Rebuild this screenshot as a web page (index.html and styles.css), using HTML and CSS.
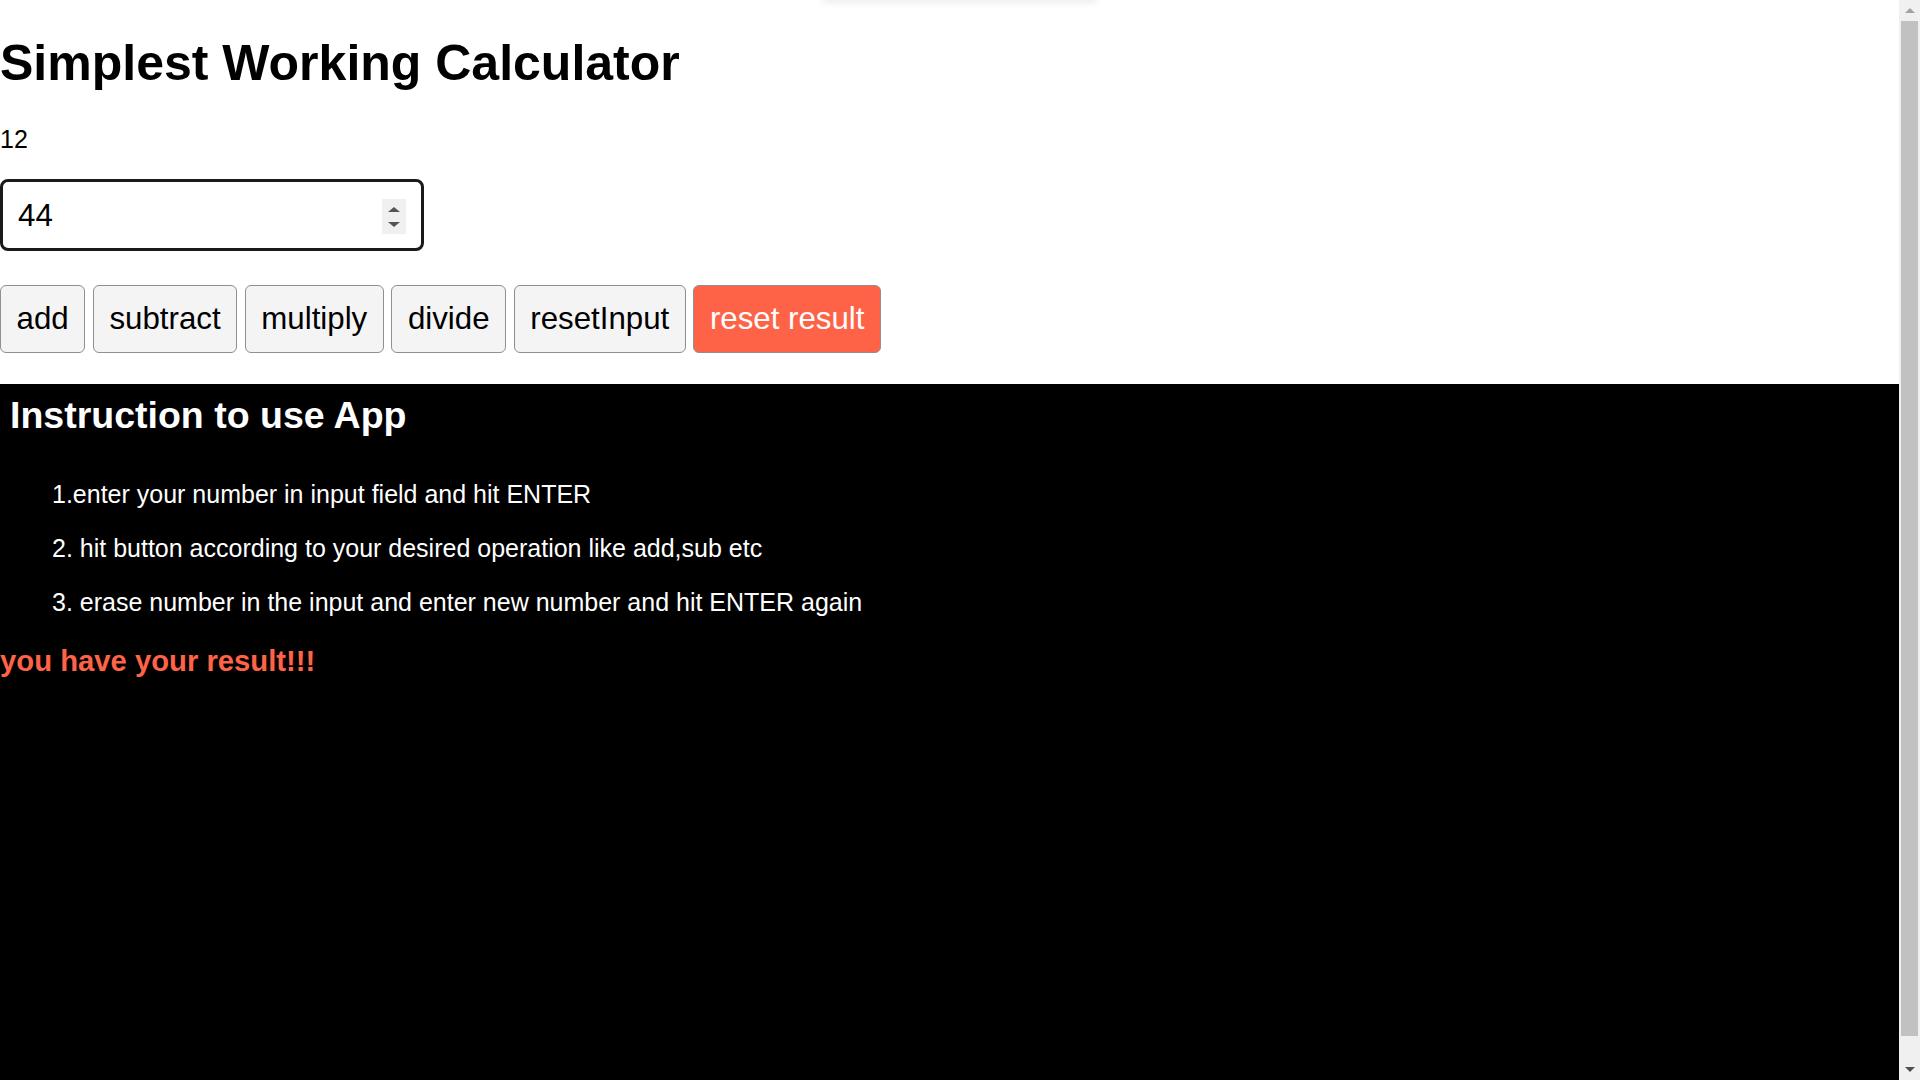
FILE: index.html
```html
<!DOCTYPE html>
<html lang="en">
<head>
<meta charset="utf-8">
<title>Simplest Working Calculator</title>
<link rel="stylesheet" href="styles.css">
</head>
<body>
<div class="toast-shadow"></div>
<div class="app">
  <div class="top">
    <h1 class="title">Simplest Working Calculator</h1>
    <p class="result">12</p>
    <div class="field">
      <input class="num" type="number" value="44">
      <span class="spin"><span class="up"></span><span class="down"></span></span>
    </div>
    <div class="ops">
      <button class="btn">add</button>
      <button class="btn">subtract</button>
      <button class="btn">multiply</button>
      <button class="btn">divide</button>
      <button class="btn">resetInput</button>
      <button class="btn btn-reset">reset result</button>
    </div>
  </div>
  <section class="guide">
    <h2 class="guide-title">Instruction to use App</h2>
    <ul class="steps">
      <li>1.enter your number in input field and hit ENTER</li>
      <li>2. hit button according to your desired operation like add,sub etc</li>
      <li>3. erase number in the input and enter new number and hit ENTER again</li>
    </ul>
  </section>
  <h3 class="done">you have your result!!!</h3>
</div>
<div class="scrollbar">
  <span class="sb-arrow sb-up"></span>
  <span class="sb-track"><span class="sb-thumb"></span></span>
  <span class="sb-arrow sb-down"></span>
</div>
</body>
</html>
```
FILE: styles.css
```css
html {
  background: #ffffff;
}
body {
  margin: 0;
  font-family: "Liberation Sans", Arial, sans-serif;
  font-size: 25px;
  color: #000;
}
.toast-shadow {
  position: absolute;
  top: -12px;
  left: 822px;
  width: 276px;
  height: 12px;
  border-radius: 8px;
  box-shadow: 0 2px 9px rgba(0, 0, 0, 0.09);
}
.app {
  height: 100vh;
  background: #000;
}
.top {
  background: #fff;
  padding-bottom: 31px;
}
.title {
  font-size: 50px;
  font-weight: bold;
  margin: 33.5px 0;
  line-height: normal;
}
.result {
  margin: 25px 0;
  line-height: normal;
}
.field {
  position: relative;
  width: 424px;
  margin-bottom: 34px;
}
.num {
  display: block;
  box-sizing: border-box;
  width: 424px;
  height: 72px;
  border: 3px solid #1a1a1a;
  border-radius: 8px;
  padding: 1px 15px 0;
  font-family: "Liberation Sans", Arial, sans-serif;
  font-size: 31.25px;
  color: #000;
  background: #fff;
  outline: none;
  -moz-appearance: textfield;
}
.num::-webkit-inner-spin-button,
.num::-webkit-outer-spin-button {
  -webkit-appearance: none;
  margin: 0;
}
.spin {
  position: absolute;
  right: 18px;
  top: 20px;
  width: 24px;
  height: 35px;
  background: #f0f0f0;
  display: flex;
  flex-direction: column;
  align-items: center;
  justify-content: center;
  gap: 10px;
}
.up {
  width: 0;
  height: 0;
  border-left: 6px solid transparent;
  border-right: 6px solid transparent;
  border-bottom: 5px solid #555;
}
.down {
  width: 0;
  height: 0;
  border-left: 6px solid transparent;
  border-right: 6px solid transparent;
  border-top: 5px solid #555;
}
.ops {
  display: flex;
  gap: 7.5px;
}
.btn {
  font-family: "Liberation Sans", Arial, sans-serif;
  font-size: 31.25px;
  line-height: 34px;
  padding: 16px 15.6px;
  border: 1px solid #8f8f8f;
  border-radius: 6px;
  background: #f4f4f4;
  color: #000;
  margin: 0;
}
.btn-reset {
  background: #ff6347;
  color: #fff;
}
.guide {
  padding: 10.3px 10px 0;
  color: #fff;
}
.guide-title {
  font-size: 37.5px;
  font-weight: bold;
  margin: 0 0 43px;
  line-height: normal;
}
.steps {
  list-style: none;
  margin: 0;
  padding-left: 42px;
}
.steps li {
  margin: 25px 0;
  line-height: normal;
}
.done {
  color: #ff6347;
  font-size: 29.25px;
  font-weight: bold;
  margin: 28px 0;
  line-height: normal;
}
.scrollbar {
  position: fixed;
  top: 0;
  right: 0;
  width: 21px;
  height: 100vh;
  background: #f0f0f0;
  display: flex;
  flex-direction: column;
  align-items: center;
}
.sb-arrow {
  height: 21px;
  width: 21px;
  display: flex;
  align-items: center;
  justify-content: center;
  flex: none;
}
.sb-up::before {
  content: "";
  border-left: 5px solid transparent;
  border-right: 5px solid transparent;
  border-bottom: 5px solid #a3a3a3;
}
.sb-down::before {
  content: "";
  border-left: 5px solid transparent;
  border-right: 5px solid transparent;
  border-top: 5px solid #505050;
}
.sb-track {
  flex: 1;
  width: 17px;
  display: flex;
  flex-direction: column;
}
.sb-thumb {
  height: 1015px;
  background: #c1c1c1;
}
```
